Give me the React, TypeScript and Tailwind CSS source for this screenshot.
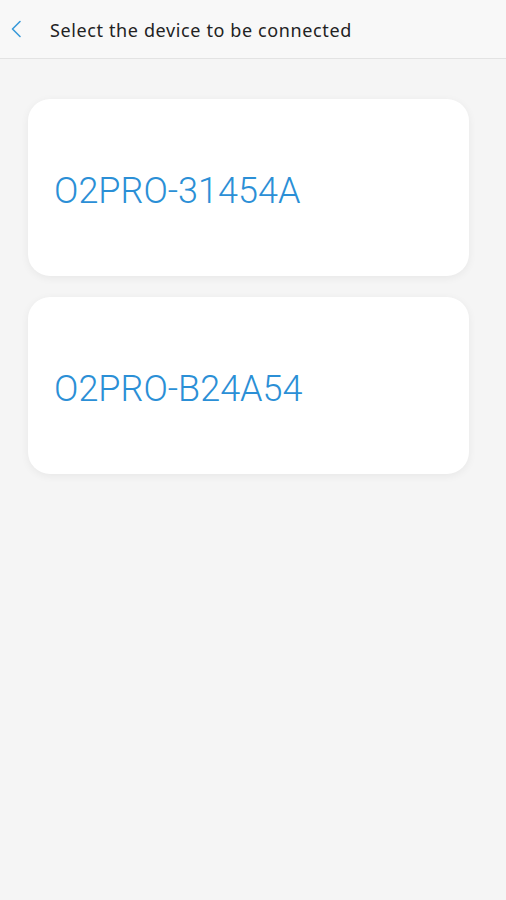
import React from "react";

const devices = ["O2PRO-31454A", "O2PRO-B24A54"];

export default function App() {
  return (
    <div className="min-h-[900px] w-full bg-[#f5f5f5]" style={{ fontFamily: "Roboto, 'Noto Sans', sans-serif" }}>
      <header className="flex h-[59px] items-center border-b border-[#e3e3e3] bg-[#f8f8f8]">
        <div className="flex w-[50px] items-center pl-[10px]">
          <svg width="12" height="18" viewBox="0 0 12 18" fill="none">
            <path d="M10 1.5 L2.5 9 L10 16.5" stroke="#3a9ad9" strokeWidth="1.6" strokeLinecap="round" strokeLinejoin="round" />
          </svg>
        </div>
        <h1 className="pt-[2px] text-[18px] tracking-[0.62px] text-[#222]" style={{ fontFamily: "'Noto Sans', sans-serif" }}>
          Select the device to be connected
        </h1>
      </header>
      <div className="flex flex-col gap-[21px] pl-[28px] pr-[37px] pt-[40px]">
        {devices.map((d) => (
          <div
            key={d}
            className="flex h-[177px] items-center rounded-[22px] bg-white pl-[26px] shadow-[0_2px_8px_rgba(0,0,0,0.06)]"
          >
            <span className="pt-[6px] text-[36px] font-light text-[#2b8fd6]">{d}</span>
          </div>
        ))}
      </div>
    </div>
  );
}
